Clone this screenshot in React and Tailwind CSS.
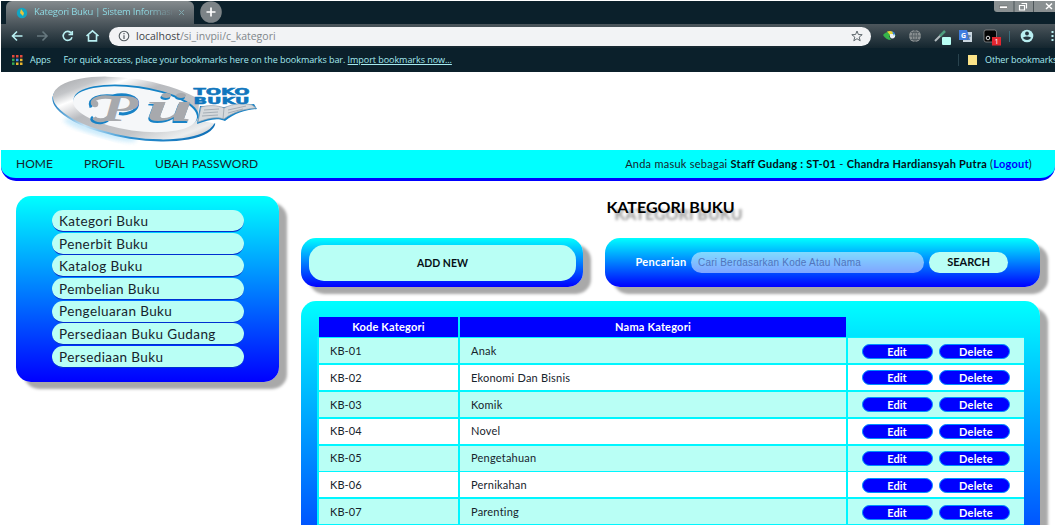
import React from "react";

const menu = ["Kategori Buku", "Penerbit Buku", "Katalog Buku", "Pembelian Buku", "Pengeluaran Buku", "Persediaan Buku Gudang", "Persediaan Buku"];
const rows = [
  ["KB-01", "Anak"],
  ["KB-02", "Ekonomi Dan Bisnis"],
  ["KB-03", "Komik"],
  ["KB-04", "Novel"],
  ["KB-05", "Pengetahuan"],
  ["KB-06", "Pernikahan"],
  ["KB-07", "Parenting"],
];

function Logo() {
  return (
    <svg width="230" height="78" viewBox="40 72 230 78" className="ml-[39px] block">
      <defs>
        <linearGradient id="silver" x1="0" y1="0.2" x2="1" y2="0.8">
          <stop offset="0" stopColor="#a5a7aa" />
          <stop offset="0.15" stopColor="#c4c6c9" />
          <stop offset="0.24" stopColor="#ffffff" />
          <stop offset="0.4" stopColor="#b9bbbf" />
          <stop offset="0.7" stopColor="#c3c5c8" />
          <stop offset="0.88" stopColor="#eceeef" />
          <stop offset="1" stopColor="#b5b7ba" />
        </linearGradient>
        <linearGradient id="rim" x1="0" y1="0" x2="1" y2="0">
          <stop offset="0" stopColor="#1e7fc2" />
          <stop offset="0.22" stopColor="#c5e4f7" />
          <stop offset="0.5" stopColor="#2a8fd0" />
          <stop offset="1" stopColor="#0f6fb6" />
        </linearGradient>
        <filter id="soft"><feGaussianBlur stdDeviation="2" /></filter>
      </defs>
      <ellipse cx="100" cy="130" rx="38" ry="6" fill="#bfe6fa" filter="url(#soft)" transform="rotate(16 100 130)" opacity="0.8" />
      <ellipse cx="134" cy="110" rx="82.500" ry="29" fill="url(#rim)" transform="rotate(9 134 110)" />
      <ellipse cx="134" cy="108" rx="82" ry="29" fill="url(#silver)" transform="rotate(9 134 108)" />
      <path d="M198 120 L200 86 L222 92 L222 125 Z" fill="#fff" />
      <ellipse cx="136" cy="107.500" rx="63" ry="21.500" fill="#1583c6" transform="rotate(8 136 107.500)" />
      <ellipse cx="135" cy="109.200" rx="62.500" ry="21.500" fill="#f5f7f9" transform="rotate(8 135 109.200)" />
      <path d="M91 107.500C87 98 100 94.500 113 96C124 93 139 96 137.500 105C136 112 126 115 119 113.500M116 99C112 108 114 121 102 122.500C95 123.500 89 120 93 117" fill="none" stroke="#1782c6" strokeWidth="3" />
      <g fontFamily="'Liberation Serif', serif" fontWeight="bold" fontStyle="italic">
        <text x="101" y="121" fontSize="37" textLength="37" lengthAdjust="spacingAndGlyphs" fill="#a7a9ad">P</text>
        <text x="145" y="122.500" fontSize="43" textLength="47" lengthAdjust="spacingAndGlyphs" fill="#1782c6">ü</text>
        <text x="146" y="120.700" fontSize="43" textLength="47" lengthAdjust="spacingAndGlyphs" fill="#a7a9ad">ü</text>
      </g>
      <path d="M93 104.500C90 98.500 102 95.500 114 98" fill="none" stroke="#a7a9ad" strokeWidth="3.500" />
      <circle cx="95" cy="104" r="3.300" fill="#a7a9ad" />
      <path d="M94 117.500C96 121 104 121.500 109 117" fill="none" stroke="#a7a9ad" strokeWidth="3.800" />
      <path d="M200 106 L224 107 L254 104 L257 109 C245 110 235 113 225 121 C216 117 207 121 197 124 Z" fill="#1782c6" />
      <path d="M201 107 C209 105 217 105 224 108 C234 103 244 103 252 105 L256 108 C244 109 233 112 224 119 C216 116 206 119 198 122 Z" fill="#d5d9dc" stroke="#94a4b0" strokeWidth="0.700" />
      <path d="M224 108 L223 119 M204 110 L219 109 M203 113 L218 112 M202 116 L218 115 M228 110 L246 106 M228 113 L243 109" stroke="#8f9ba5" strokeWidth="0.700" fill="none" />
      <g fontFamily="'DejaVu Sans', sans-serif" fontWeight="bold" fontSize="9" fill="#0f76bd" stroke="#0f76bd" strokeWidth="0.500">
        <text x="193.500" y="95" textLength="56" lengthAdjust="spacingAndGlyphs">TOKO</text>
        <text x="193.500" y="104" textLength="56" lengthAdjust="spacingAndGlyphs">BUKU</text>
      </g>
    </svg>
  );
}

function Browser() {
  return (
    <div className="h-[71px] bg-[#0b202b] font-['Open_Sans',sans-serif] text-[#a5eaf0]">
      <div className="flex h-[23px] items-start justify-between">
        <div className="flex">
          <div className="ml-[5px] flex h-[23px] w-[188px] items-center rounded-t-[6px] bg-linear-to-b from-[#858b8e] to-[#4c565c] pl-[10px] text-[9.500px]">
            <svg width="12" height="12" viewBox="0 0 12 12"><circle cx="6" cy="6" r="5.200" fill="#11a5c4" /><path d="M5 2 L8 6 L7 9 L4 6Z" fill="#e8c53c" /></svg>
            <span className="ml-[6px] w-[138px] whitespace-nowrap bg-linear-to-r from-[#8fe0ea] from-80% to-[#6c7a80] bg-clip-text tracking-[-0.25px] text-transparent">Kategori Buku | Sistem Informasi</span>
            <svg width="7" height="7" viewBox="0 0 7 7" className="ml-[6px]"><path d="M1 1L6 6M6 1L1 6" stroke="#7fa7ad" /></svg>
          </div>
          <svg width="22" height="22" viewBox="0 0 22 22" className="ml-[6px]"><circle cx="11" cy="11" r="10.800" fill="#7c8387" /><path d="M11 6.500V15.500M6.500 11H15.500" stroke="#fff" strokeWidth="1.700" /></svg>
        </div>
        <svg width="61" height="11" viewBox="0 0 61 11">
          <path d="M0 0H61V11H3Q0 11 0 8Z" fill="#8a9092" />
          <path d="M20 0V11M39.500 0V11" stroke="#4b5458" />
          <rect x="5.500" y="5" width="8" height="2.500" fill="#fff" stroke="#555" strokeWidth="0.500" />
          <path d="M27.500 2.500H32.500V7.500M25.500 4.500H30.500V9H25.500Z" fill="none" stroke="#fff" strokeWidth="1.200" />
          <path d="M52 2.500L58 8M58 2.500L52 8" stroke="#fff" strokeWidth="1.500" />
        </svg>
      </div>
      <div className="flex h-[24px] items-center bg-linear-to-b from-[#4c565c] to-[#14262f]">
        <svg width="97" height="16" viewBox="0 0 97 16" className="ml-[9px]" fill="none" stroke="#b9eff2" strokeWidth="1.600">
          <path d="M12.500 8H2.500M7 3.500L2.500 8L7 12.500" />
          <path d="M27 8H37M32.500 3.500L37 8L32.500 12.500" stroke="#66777e" />
          <path d="M61.300 5.200A4.500 4.500 0 1 0 62 9.200M62.300 3V6.500H58.500" />
          <path d="M76.500 8L82.500 2.800L88.500 8M78.500 7V12.900H86.500V7" />
        </svg>
        <div className="ml-[2px] flex h-[19px] w-[762px] items-center justify-between rounded-full bg-[#f2f3f5] pl-[9px] pr-[8px]">
          <div className="flex items-center gap-[6px]">
            <svg width="12" height="12" viewBox="0 0 12 12"><circle cx="6" cy="6" r="4.800" fill="none" stroke="#50585d" strokeWidth="1.100" /><path d="M6 5.300V9M6 3V4.300" stroke="#50585d" strokeWidth="1.200" /></svg>
            <span className="pt-px text-[10.500px] text-[#80868b]"><span className="text-[#3e4448]">localhost</span>/si_invpii/c_kategori</span>
          </div>
          <svg width="12" height="12" viewBox="0 0 12 12"><path d="M6 1L7.400 4.500L11.200 4.700L8.200 7.100L9.200 10.800L6 8.700L2.800 10.800L3.800 7.100L.8 4.700L4.600 4.500Z" fill="none" stroke="#5f686d" /></svg>
        </div>
        <svg width="184" height="24" viewBox="871 25 184 24">
          <path d="M883 36Q887 31 893 33L896 37L889 37L891 41Q886 41 883 36Z" fill="#36b34a" />
          <path d="M887 32.500Q892 31 894 34L890 36Z" fill="#e9d53a" /><path d="M890 35H895V38Q892 41 890 38Z" fill="#edf3f5" /><path d="M892 32L895 34L894 37Z" fill="#2f7fd6" />
          <circle cx="915" cy="37" r="6" fill="#8a9092" /><path d="M909 37H921M915 31V43M911 33.500H919M911 40.500H919M915 31Q909 37 915 43Q921 37 915 31" fill="none" stroke="#4d575c" strokeWidth="0.800" />
          <path d="M935 42L941 36" stroke="#b3bcc0" strokeWidth="2" /><path d="M940 37L945 32" stroke="#4f9f80" strokeWidth="2.500" />
          <rect x="942" y="38" width="9" height="8" rx="1" fill="#b9fff5" />
          <rect x="963" y="33" width="9" height="10" fill="#cbd7e0" /><path d="M959 31H967L970 41H959Z" fill="#3f7de0" /><text x="961" y="38.500" fontSize="7" fontWeight="bold" fill="#fff">G</text><path d="M967 37H971M969 36V38L967 41" stroke="#5b7690" fill="none" />
          <rect x="984" y="31" width="12.500" height="12" rx="2" fill="#050505" stroke="#999" strokeWidth="0.700" /><circle cx="988" cy="39" r="1.800" fill="none" stroke="#ddd" />
          <rect x="992" y="38" width="9" height="8.500" fill="#e3262f" /><text x="994.500" y="45" fontSize="7.500" fill="#fff">1</text>
          <path d="M1009.500 32V43" stroke="#3d7788" strokeWidth="0.800" />
          <circle cx="1027" cy="37" r="6.300" fill="#b9eff2" /><circle cx="1027" cy="34.500" r="1.900" fill="#26363f" /><path d="M1022.700 38.700Q1027 36.500 1031.300 38.700Q1027 43.500 1022.700 38.700" fill="#26363f" />
          <path d="M1051.500 32H1053.500V34H1051.500ZM1051.500 36H1053.500V38H1051.500ZM1051.500 40H1053.500V42H1051.500Z" fill="#b9eff2" />
        </svg>
      </div>
      <div className="flex h-[24px] items-center overflow-hidden whitespace-nowrap pb-px text-[9px] tracking-[-0.05px]">
        <svg width="11" height="10" viewBox="0 0 11 10" className="ml-[11px]">
          <path d="M0 0h2.500v2.500H0zM4 0h2.500v2.500H4zM8 0h2.500v2.500H8z" fill="#e44a3c" />
          <path d="M0 3.700h2.500v2.500H0z" fill="#35a955" /><path d="M4 3.700h2.500v2.500H4z" fill="#4a86e8" /><path d="M8 3.700h2.500v2.500H8z" fill="#e9b52e" />
          <path d="M0 7.400h2.500v2.500H0z" fill="#35a955" /><path d="M4 7.400h2.500v2.500H4zM8 7.400h2.500v2.500H8z" fill="#e9b52e" />
        </svg>
        <span className="ml-[7px] w-[33.500px]">Apps</span>
        <span className="flex-1">For quick access, place your bookmarks here on the bookmarks bar. <span className="underline">Import bookmarks now...</span></span>
        <span className="h-[12px] w-px bg-[#29434e]" />
        <span className="ml-[9px] h-[10px] w-[9px] bg-[#fbe388]" />
        <span className="ml-[8px] w-[70px] tracking-[-0.120px]">Other bookmarks</span>
      </div>
    </div>
  );
}

const panel = "bg-linear-to-b/srgb from-[#00ffff] to-[#0000ff] rounded-[15px] shadow-[8px_7px_3px_#a9a9a9]";

export default function App() {
  return (
    <div className="h-[526px] w-[1056px] overflow-hidden bg-white p-px font-['Lato',sans-serif] text-[#17242c]">
      <div className="h-[524px] overflow-hidden">
        <Browser />
        <Logo />
        <nav className="flex h-[31px] items-center justify-between rounded-b-[15px] border-b-[3px] border-[#0000ff] bg-[#00ffff] pl-[15px] pr-[23px]">
          <div className="flex text-[12px]">
            <span className="w-[68px]">HOME</span>
            <span className="w-[71px]">PROFIL</span>
            <span>UBAH PASSWORD</span>
          </div>
          <div className="text-[11px] tracking-[0.25px]">
            Anda masuk sebagai <b className="text-[#061016]">Staff Gudang : ST-01</b> - <b className="text-[#061016]">Chandra Hardiansyah Putra</b> (<b className="text-[#0000ff]">Logout</b>)
          </div>
        </nav>
        <div className="flex items-start pt-[15px]">
          <aside className={"ml-[15px] h-[186px] w-[263px] shrink-0 pl-[36px] pt-[14px] " + panel}>
            {menu.map((m) => (
              <div key={m} className="mb-[0.65px] flex h-[22px] w-[192px] items-center rounded-full border-b border-[#0030d0] bg-[#b9fff5] pl-[7px] pt-px text-[13.500px] tracking-[0.4px]">{m}</div>
            ))}
          </aside>
          <main className="ml-[22px] w-[739px] shrink-0">
            <h1 className="h-[42px] text-center text-[16px] font-bold leading-[21px] text-black [text-shadow:8px_7px_3px_#999]">KATEGORI BUKU</h1>
            <div className="flex justify-between">
              <div className={"h-[49px] w-[282px] px-[8px] pt-[7px] " + panel}>
                <button className="h-[36px] w-[267px] rounded-[15px] bg-[#b9fff5] pt-px text-[10.500px] font-bold text-[#061016]">ADD NEW</button>
              </div>
              <div className={"flex h-[49px] w-[435px] items-center pl-[30.500px] " + panel}>
                <span className="w-[55.500px] text-[11px] font-bold tracking-[0.300px] text-white">Pencarian</span>
                <div className="flex h-[21px] w-[233px] items-center rounded-full bg-white/50 pl-[7px] font-['Liberation_Sans',sans-serif] text-[10px] tracking-[0.22px] text-[#5274bc]">Cari Berdasarkan Kode Atau Nama</div>
                <button className="ml-[5px] h-[21px] w-[79px] rounded-full bg-[#b9fff5] text-[11px] font-bold text-[#061016]">SEARCH</button>
              </div>
            </div>
            <div className={"mt-[14px] h-[337px] px-[16px] pt-[16px] " + panel}>
              <div className="grid grid-cols-[139px_386px_1fr] gap-x-[2px] pl-[2px] text-[11px] tracking-[0.200px]">
                <div className="flex h-[20px] items-center justify-center bg-[#0000ff] font-bold text-white">Kode Kategori</div>
                <div className="flex h-[20px] items-center justify-center bg-[#0000ff] font-bold text-white">Nama Kategori</div>
              </div>
              <div className="bg-[#00f6ff]">
                {rows.map(([k, n], i) => (
                  <div key={k} className={"grid grid-cols-[139px_386px_1fr] gap-x-[2px] pb-[0.900px] pl-[2px] pt-px text-[11px] " + (i % 2 ? "[&>*]:bg-white" : "[&>*]:bg-[#b9fff5]")}>
                    <div className="flex h-[25px] items-center pl-[11px] pt-px tracking-[0.100px]">{k}</div>
                    <div className="flex h-[25px] items-center pl-[11px] pt-px tracking-[0.220px]">{n}</div>
                    <div className="flex h-[25px] items-center gap-[6px] pl-[13.500px] pt-px">
                      <button className="h-[15px] w-[71px] rounded-full border border-[#0090ff] bg-[#0000ff] font-bold leading-[13px] text-white">Edit</button>
                      <button className="h-[15px] w-[71px] rounded-full border border-[#0090ff] bg-[#0000ff] pl-[4px] font-bold leading-[13px] tracking-[0.200px] text-white">Delete</button>
                    </div>
                  </div>
                ))}
              </div>
            </div>
          </main>
        </div>
      </div>
    </div>
  );
}
